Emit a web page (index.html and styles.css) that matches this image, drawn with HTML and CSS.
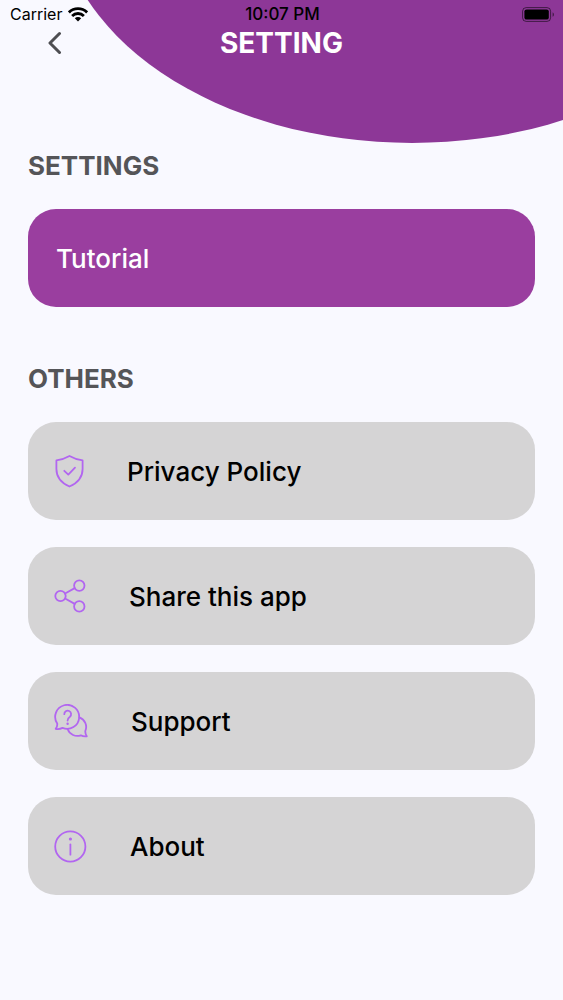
FILE: index.html
```html
<!DOCTYPE html>
<html lang="en">
<head>
<meta charset="utf-8">
<meta name="viewport" content="width=device-width, initial-scale=1">
<title>Setting</title>
<link rel="stylesheet" href="styles.css">
</head>
<body>
<div class="screen">
  <div class="backdrop"></div>
  <div class="status-bar">
    <div class="carrier">
      <span>Carrier</span>
      <svg class="wifi" viewBox="0 0 20 15" width="20" height="15" fill="none" stroke="#000" stroke-width="2.8" aria-hidden="true">
        <path d="M0.9 5.4a13 13 0 0 1 18.2 0"/>
        <path d="M4.1 8.9a8.4 8.4 0 0 1 11.8 0"/>
        <path d="M6.8 11.3a4.6 4.6 0 0 1 6.4 0L10 14.6z" fill="#000" stroke="none"/>
      </svg>
    </div>
    <time class="clock">10:07 PM</time>
    <svg class="battery" viewBox="0 0 33 15" width="33" height="15" aria-hidden="true">
      <rect x="0.6" y="0.6" width="28" height="13.8" rx="3.6" fill="none" stroke="#000" stroke-opacity=".55"/>
      <rect x="2.4" y="2.4" width="24.4" height="10.2" rx="2.2" fill="#000"/>
      <path d="M30.6 5.2c1.8.8 1.8 3.8 0 4.6z" fill="#000" fill-opacity=".55"/>
    </svg>
  </div>
  <header class="nav">
    <button class="back" type="button" aria-label="Back">
      <svg viewBox="0 0 14 24" width="14" height="24" fill="none" stroke="#4e4e52" stroke-width="3" stroke-linecap="round" stroke-linejoin="round"><path d="M11.500 2.500 2 12 11.500 21.500"/></svg>
    </button>
    <h1 class="title">SETTING</h1>
  </header>
  <main class="content">
    <section class="group">
      <h2 class="heading">SETTINGS</h2>
      <button class="card card-primary" type="button">Tutorial</button>
    </section>
    <section class="group">
      <h2 class="heading">OTHERS</h2>
      <button class="card" type="button">
        <svg class="icon" viewBox="0 0 30 34" width="30" height="34" aria-hidden="true"><path d="M15.500 2C19 4 24 5.900 28.600 6.400V15C28.600 23 23.500 29 15.500 32.500C7.500 29 2.400 23 2.400 15V6.400C7 5.900 12 4 15.500 2Z"/><path d="m10.300 16.800 4 3.800 6.700-6.900"/></svg>
        <span>Privacy Policy</span>
      </button>
      <button class="card" type="button">
        <svg class="icon" viewBox="0 0 32 34" width="32" height="34" aria-hidden="true"><circle cx="6.500" cy="17" r="5.200"/><circle cx="25.300" cy="6.600" r="5.200"/><circle cx="25.300" cy="27.400" r="5.200"/><path d="m11.100 14.500 9.600-5.400M11.100 19.500l9.600 5.400"/></svg>
        <span>Share this app</span>
      </button>
      <button class="card" type="button">
        <svg class="icon" viewBox="0 0 34 34" width="34" height="34" aria-hidden="true"><path d="M3.200 19.500A12 12 0 1 1 8.500 23.900C6.300 25.100 4 25.300 1.700 24.900C3 23.200 3.500 21.500 3.200 19.500Z"/><path d="M25.300 13.300A10.200 10.200 0 0 1 31.300 27C31.200 29.200 31.700 30.800 32.800 32.300C30.600 32.700 28.600 32.300 26.800 31.300A10.200 10.200 0 0 1 13.700 25.300"/><path d="M10.300 10.200a3.400 3.400 0 1 1 5.600 2.500c-1.600 1.200-2.300 1.800-2.300 3.800"/><circle class="dot" cx="13.600" cy="19.700" r="1.200"/></svg>
        <span>Support</span>
      </button>
      <button class="card" type="button">
        <svg class="icon" viewBox="0 0 33 34" width="33" height="34" aria-hidden="true"><circle cx="16.300" cy="17.500" r="15.100"/><path d="M16.400 15.500v10.200"/><circle class="dot" cx="16.400" cy="10" r="1.600"/></svg>
        <span>About</span>
      </button>
    </section>
  </main>
</div>
</body>
</html>
```
FILE: styles.css
```css
* {
  box-sizing: border-box;
}

body {
  margin: 0;
  background: #f9f9ff;
  color: #000;
  font-family: Inter, "Liberation Sans", sans-serif;
}

button {
  font: inherit;
  border: 0;
  cursor: pointer;
}

.screen {
  position: relative;
  min-height: 100vh;
  overflow: hidden;
}

.backdrop {
  position: absolute;
  z-index: -1;
  left: 57px;
  top: -339px;
  width: 710px;
  height: 482px;
  border-radius: 50%;
  background: #8d3797;
}

.status-bar {
  display: grid;
  grid-template-columns: 1fr auto 1fr;
  align-items: center;
  height: 28px;
  padding: 0 8px 0 10px;
  font-size: 16px;
  line-height: 28px;
}

.carrier {
  display: flex;
  align-items: center;
  gap: 6px;
}

.clock {
  font-size: 17px;
  font-weight: 500;
}

.battery {
  justify-self: end;
}

.nav {
  display: grid;
  grid-template-columns: 1fr auto 1fr;
  align-items: center;
  height: 30px;
  padding: 0 28px;
}

.back {
  display: flex;
  justify-self: start;
  padding: 0 20px;
  background: none;
}

.title {
  margin: 0;
  color: #fff;
  font-size: 28px;
  font-weight: 700;
  line-height: 30px;
}

.content {
  display: flex;
  flex-direction: column;
  gap: 55px;
  padding: 91px 28px 28px;
}

.group {
  display: flex;
  flex-direction: column;
  gap: 27px;
}

.heading {
  margin: 0;
  color: #555558;
  font-size: 26px;
  font-weight: 700;
  line-height: 33px;
}

.card {
  display: flex;
  align-items: center;
  gap: 43px;
  height: 98px;
  padding: 0 26px;
  border-radius: 28px;
  background: #d5d4d5;
  color: #000;
  font-size: 26px;
  font-weight: 500;
  text-align: left;
}

.card-primary {
  padding: 0 28px;
  background: #9a3e9f;
  color: #fff;
}

.icon {
  fill: none;
  stroke: #b266f0;
  stroke-width: 1.8;
  stroke-linecap: round;
  stroke-linejoin: round;
}

.dot {
  fill: #b266f0;
  stroke: none;
}
```
